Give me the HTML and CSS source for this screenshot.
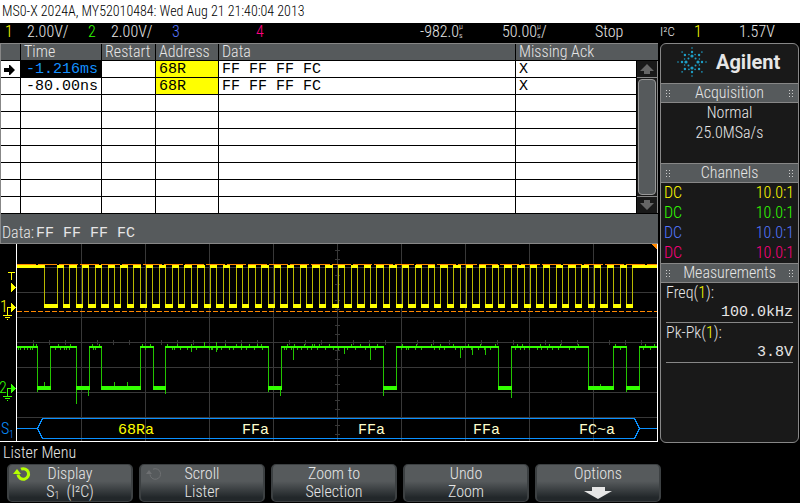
FILE: index.html
```html
<!DOCTYPE html>
<html lang="en">
<head>
    <meta charset="UTF-8">
    <meta name="viewport" content="width=device-width, initial-scale=1.0">
    <title>MSO-X 2024A</title>
    <link rel="stylesheet" href="styles.css">
</head>
<body>
    <header class="titlebar">MS0-X 2024A, MY52010484: Wed Aug 21 21:40:04 2013</header>
    <div class="status">
        <span class="ch1">1</span>
        <span>2.00V/</span>
        <span class="ch2">2</span>
        <span>2.00V/</span>
        <span class="ch3">3</span>
        <span class="ch4">4</span>
        <span class="timing">-982.0<span class="unit"><i>µ</i><i>s</i></span></span>
        <span class="timing">50.00<span class="unit"><i>µ</i><i>s</i></span>/</span>
        <span>Stop</span>
        <span class="trigger">I²C</span>
        <span class="ch1">1</span>
        <span>1.57V</span>
    </div>

    <main class="screen">
        <div class="left">
            <section class="lister">
                <table>
                    <colgroup>
                        <col class="col-mark"><col class="col-time"><col class="col-restart"><col class="col-address"><col><col class="col-ack"><col class="col-scroll">
                    </colgroup>
                    <thead>
                        <tr><th></th><th>Time</th><th>Restart</th><th>Address</th><th>Data</th><th colspan="2">Missing Ack</th></tr>
                    </thead>
                    <tbody>
                        <tr>
                            <td class="mark"><svg width="12" height="12" viewBox="0 0 12 12"><path d="M1 4h5V1h1l5 5-5 5H6V8H1z"/></svg></td>
                            <td class="selected">-1.216ms</td><td></td><td class="address">68R</td><td>FF FF FF FC</td><td>X</td>
                            <td class="scroll" rowspan="9">
                                <div class="scrollbar">
                                    <button class="arrow" aria-label="Scroll up"><svg width="16" height="12" viewBox="0 0 16 12"><path d="M8 1l7 7h-4v3H5V8H1z"/></svg></button>
                                    <div class="thumb"></div>
                                    <button class="arrow" aria-label="Scroll down"><svg width="16" height="12" viewBox="0 0 16 12"><path d="M8 11l7-7h-4V1H5v3H1z"/></svg></button>
                                </div>
                            </td>
                        </tr>
                        <tr><td></td><td>-80.00ns</td><td></td><td class="address">68R</td><td>FF FF FF FC</td><td>X</td></tr>
                        <tr><td></td><td></td><td></td><td></td><td></td><td></td></tr>
                        <tr><td></td><td></td><td></td><td></td><td></td><td></td></tr>
                        <tr><td></td><td></td><td></td><td></td><td></td><td></td></tr>
                        <tr><td></td><td></td><td></td><td></td><td></td><td></td></tr>
                        <tr><td></td><td></td><td></td><td></td><td></td><td></td></tr>
                        <tr><td></td><td></td><td></td><td></td><td></td><td></td></tr>
                        <tr><td></td><td></td><td></td><td></td><td></td><td></td></tr>
                    </tbody>
                </table>
                <div class="detail"><span>Data:</span><span class="bytes">FF FF FF FC</span></div>
            </section>

            <svg class="scope" viewBox="0 0 658 199" shape-rendering="crispEdges">
                <path id="grid" class="grid"/>
                <path id="clock-edges" class="clock-edge"/>
                <path id="clock-high" class="clock-high"/>
                <path id="clock-low" class="clock-low"/>
                <path class="cursor" stroke-dasharray="19 2" d="M17 20.5H657"/>
                <path class="cursor" stroke-dasharray="5 2" d="M17 67.5H657"/>
                <path id="data-noise" class="data-edge"/>
                <path id="data-edges" class="data-edge"/>
                <path id="data-high" class="data-high"/>
                <path id="data-low" class="data-low"/>
                <path class="bus" d="M17 184.5H37.5L42.5 174.5H634.5L639.5 184.5H657M37.5 184.5L42.5 194.5H634.5L639.5 184.5"/>
                <text class="bus-text address-text" x="118" y="190">68Ra</text>
                <text class="bus-text" x="242" y="190">FFa</text>
                <text class="bus-text" x="358" y="190">FFa</text>
                <text class="bus-text" x="473" y="190">FFa</text>
                <text class="bus-text" x="579" y="190">FC~a</text>
                <path class="frame" d="M16.5 0V197.5M657.5 0V198M0 197.5H658"/>
                <path class="corner" d="M651 0h6v6z"/>
                <!-- trigger level and ground markers -->
                <path class="mark1" d="M8 28.5h7M11.5 28v8"/>
                <path class="fill1" d="M11 39l5 4.5-5 4.5z"/>
                <text class="label1" x="0" y="68">1</text>
                <path class="mark1" d="M7.5 71V63.5H12M3 71.5h9M5 73.5h5M7 75.5h1"/>
                <path class="fill1" d="M11 59l5 4.5-5 4.5z"/>
                <text class="label2" x="-1" y="149">2</text>
                <path class="mark2" d="M7.5 152V144.5H12M3 152.5h9M5 154.5h5M7 156.5h1"/>
                <path class="fill2" d="M11 140l5 4.5-5 4.5z"/>
                <text class="label-bus" x="1" y="190">S</text>
                <text class="label-bus small" x="9" y="194">1</text>
            </svg>
        </div>

        <aside class="sidebar">
            <div class="brand">
                <svg width="30" height="30" viewBox="-15 -15 30 30">
                    <g id="spark"></g>
                </svg>
                <span>Agilent</span>
            </div>
            <h2>Acquisition</h2>
            <div class="acquisition">
                <p>Normal</p>
                <p>25.0MSa/s</p>
            </div>
            <h2>Channels</h2>
            <div class="channels">
                <p class="ch1"><span>DC</span><span>10.0:1</span></p>
                <p class="ch2"><span>DC</span><span>10.0:1</span></p>
                <p class="ch3"><span>DC</span><span>10.0:1</span></p>
                <p class="ch4"><span>DC</span><span>10.0:1</span></p>
            </div>
            <h2>Measurements</h2>
            <dl class="measurements">
                <dt>Freq(<span class="ch1">1</span>):</dt>
                <dd>100.0kHz</dd>
                <dt>Pk-Pk(<span class="ch1">1</span>):</dt>
                <dd>3.8V</dd>
            </dl>
        </aside>
    </main>

    <nav class="menu">
        <h1>Lister Menu</h1>
        <div class="softkeys">
            <button>
                <svg class="knob" width="18" height="16" viewBox="0 0 18 16"><path class="ring" d="M8 3.2A5.3 5.3 0 1 1 5 8.5"/><path class="head" d="M0 8l4-5 4 5z"/></svg>
                <span>Display</span><span>S<sub>1</sub>&nbsp; (I²C)</span>
            </button>
            <button>
                <svg class="knob off" width="18" height="16" viewBox="0 0 18 16"><path class="ring" d="M8 3.2A5.3 5.3 0 1 1 5 8.5"/><path class="head" d="M1 8l3-4 3 4z"/></svg>
                <span>Scroll</span><span>Lister</span>
            </button>
            <button><span>Zoom to</span><span>Selection</span></button>
            <button><span>Undo</span><span>Zoom</span></button>
            <button><span>Options</span><svg class="more" width="30" height="12" viewBox="0 0 30 12"><path d="M9 0h13v4h7L15 12 1 4h8z"/></svg></button>
        </div>
    </nav>

    <script>
        function draw(id, d) {
            document.getElementById(id).setAttribute("d", d);
        }

        // graticule: 64 x 25 divisions, minor ticks on the centre axes
        let grid = "";
        for (let x = 81; x < 657; x += 64) grid += `M${x}.5 0V197`;
        for (let y = 23; y < 197; y += 25) grid += `M17 ${y}.5H657`;
        for (let x = 33; x < 657; x += 16) grid += `M${x}.5 96V101`;
        for (let y = -2; y < 190; y += 25) grid += `M335 ${y + 8}.5h5M335 ${y + 17}.5h5`;
        draw("grid", grid);

        // a trace is high up to the first edge, then toggles at each edge
        function trace(name, edges, top, bottom) {
            let high = "", low = "", sides = "", start = 17;
            edges.concat(657).forEach((x, i) => {
                if (i % 2) low += `M${start} ${bottom}H${x + 1}`;
                else high += `M${start} ${top}H${x + 1}`;
                if (x < 657) sides += `M${x}.5 ${top}V${bottom}`;
                start = x;
            });
            draw(name + "-high", high);
            draw(name + "-low", low);
            draw(name + "-edges", sides);
        }

        const clock = [44, 57];
        for (let k = 0; k < 45; k++) {
            clock.push(Math.floor(63.3 + 12.8 * k), Math.floor(69.6 + 12.8 * k));
        }
        trace("clock", clock, 22.5, 62);
        trace("data", [37, 50, 76, 89, 101, 140, 153, 165, 268, 281, 383, 396, 498, 511, 588, 613, 626, 639], 103, 144);

        let noise = "";
        const up = [33, 36, 58, 70, 92, 99, 142, 150, 167, 177, 191, 204, 216, 225, 236, 241, 249, 257, 261, 287, 294, 304, 312, 314, 319, 329, 351, 360, 369, 377, 402, 416, 431, 440, 453, 468, 480, 495, 517, 522, 540, 549, 560, 578, 615, 645, 654];
        const down = [18, 20, 24, 27, 30, 32, 55, 60, 64, 66, 69, 93, 95, 145, 172, 174, 180, 187, 196, 209, 211, 212, 217, 221, 229, 233, 241, 246, 254, 262, 284, 286, 291, 297, 301, 307, 311, 317, 325, 333, 338, 347, 355, 365, 375, 401, 406, 408, 415, 421, 434, 439, 444, 455, 462, 471, 478, 484, 490, 515, 520, 524, 529, 537, 541, 547, 552, 558, 569, 575, 620, 643, 650];
        up.forEach(x => noise += `M${x}.5 100V103`);
        down.forEach(x => noise += `M${x}.5 103V106`);
        // longer glitches
        noise += "M76.5 144v16M88.5 144v8M165.5 144v6M204.5 98v6M216.5 98v6M191.5 103v5M216.5 103v5M293.5 103v13M370.5 103v13M344.5 103v7M460.5 103v11M472.5 103v8M485.5 103v8M280.5 144v8M268.5 144v4M383.5 144v8M511.5 144v10M37.5 144v4M626.5 144v4M44.5 138v5M114.5 138v5M127.5 138v5M600.5 140v4";
        draw("data-noise", noise);

        // starburst: angle, distance, dot radius
        const rays = [[0, 14, 0.8], [0, 10, 1.2], [0, 6, 1.6], [45, 14, 0.8], [45, 10, 1.2], [45, 5, 1], [22.5, 8, 0.8], [67.5, 8, 0.8]];
        let dots = "";
        for (let turn = 0; turn < 360; turn += 90) {
            rays.forEach(([angle, distance, r]) => {
                const a = (angle + turn) * Math.PI / 180;
                dots += `<circle cx="${distance * Math.cos(a)}" cy="${distance * Math.sin(a)}" r="${r}"/>`;
            });
        }
        document.getElementById("spark").innerHTML = dots;
    </script>
</body>
</html>
```
FILE: styles.css
```css
* {
    box-sizing: border-box;
}

body {
    margin: 0;
    background: #000;
    color: #e6e6e6;
    font-family: 'Roboto Condensed', 'Liberation Sans Narrow', 'Liberation Sans', sans-serif;
    font-size: 16px;
    font-weight: 300;
    line-height: 20px;
}

h1, h2, p, dl, dd {
    margin: 0;
    font-size: 16px;
    font-weight: 300;
}

.ch1 { color: #ffff00; }
.ch2 { color: #33ff00; }
.ch3 { color: #5577ff; }
.ch4 { color: #ff0080; }

.titlebar {
    background: #fff;
    color: #000;
    height: 23px;
    padding: 1px 2px;
    font-size: 14px;
}

.status {
    display: grid;
    grid-template-columns: 22fr 61fr 23fr 61fr 84fr 164fr 82fr 93fr 65fr 34fr 45fr 61fr;
    height: 20px;
    line-height: 18px;
    padding-left: 5px;
    white-space: nowrap;
}

.timing {
    display: flex;
}

.unit {
    display: flex;
    flex-direction: column;
    font-size: 8px;
    line-height: 8px;
}

.unit i {
    height: 9px;
    font-style: normal;
}

.trigger {
    font-size: 13px;
}

.screen {
    display: grid;
    grid-template-columns: minmax(0, 1fr) 139px;
    gap: 2px;
    padding-right: 1px;
}

.lister {
    background: #565a5c;
    border-top: 1px solid #878787;
    border-left: 1px solid #878787;
    border-bottom: 1px solid #878787;
}

table {
    width: 100%;
    table-layout: fixed;
    border-spacing: 0;
}

.col-mark { width: 20px; }
.col-time { width: 81px; }
.col-restart { width: 54px; }
.col-address { width: 63px; }
.col-ack { width: 121px; }
.col-scroll { width: 21px; }

th, td {
    height: 17px;
    padding: 0 3px;
    border-right: 1px solid #000;
    border-bottom: 1px solid #000;
    line-height: 16px;
    text-align: left;
    white-space: nowrap;
}

th {
    font-weight: 300;
}

th:last-child {
    border-right: none;
}

td {
    padding-top: 2px;
    background: #fff;
    color: #000;
    font-family: 'Liberation Mono', monospace;
    font-size: 15px;
    line-height: 14px;
}

td:nth-child(2) {
    padding-left: 5px;
}

.mark svg {
    display: block;
}

.mark {
    padding: 1px 2px 0;
}

.selected {
    background: #000;
    color: #1490ff;
}

.address {
    background: #ffff00;
}

td.scroll {
    padding: 0;
    border-right: none;
    height: 153px;
    background: #191919;
}

.scrollbar {
    display: flex;
    flex-direction: column;
    height: 152px;
    border-right: 1px solid #878787;
}

.arrow {
    height: 17px;
    padding: 0;
    border: 1px solid #878787;
    border-width: 0 0 1px;
    background: #191919;
    line-height: 0;
}

.arrow:last-child {
    border-width: 1px 0 0;
}

.arrow path {
    fill: #666;
}

.thumb {
    flex: 1;
    margin: 1px;
    border: 1px solid #999;
    border-radius: 4px;
    background: #565a5c;
}

.detail {
    display: flex;
    gap: 2px;
    height: 29px;
    padding: 9px 1px 0;
}

.bytes {
    font-family: 'Liberation Mono', monospace;
    font-size: 15px;
    line-height: 22px;
}

.scope {
    display: block;
    width: 100%;
}

.scope path {
    fill: none;
}

.scope .grid { stroke: #383838; }
.scope .clock-edge { stroke: #b8b800; }
.scope .clock-high { stroke: #ffff00; stroke-width: 3; }
.scope .clock-low { stroke: #ffff00; stroke-width: 4; }
.scope .cursor { stroke: #ff8800; }
.scope .data-edge { stroke: #22c400; }
.scope .data-high { stroke: #33ff00; stroke-width: 2; }
.scope .data-low { stroke: #33ff00; stroke-width: 4; }
.scope .bus { stroke: #0a90ff; }
.scope .frame { stroke: #fff; }
.scope .corner { fill: #ff8800; }
.scope .mark1 { stroke: #ffff00; }
.scope .mark2 { stroke: #33ff00; }
.scope .fill1 { fill: #ffff00; }
.scope .fill2 { fill: #33ff00; }
.label1 { fill: #ffff00; }
.label2 { fill: #33ff00; }
.label-bus { fill: #0a90ff; }
.small { font-size: 10px; }

.bus-text {
    fill: #ffffcc;
    font-family: 'Liberation Mono', monospace;
    font-size: 15px;
}

.address-text {
    fill: #ffff00;
}

.sidebar {
    border: 1px solid #878787;
    border-radius: 6px;
    background: #191919;
}

.brand {
    display: flex;
    align-items: center;
    gap: 9px;
    height: 39px;
    padding: 0 0 3px 16px;
    font-family: Roboto, sans-serif;
    font-size: 20px;
    font-weight: bold;
}

.brand svg {
    fill: #1ea0c8;
}

.sidebar h2 {
    display: flex;
    align-items: center;
    justify-content: space-between;
    height: 20px;
    padding: 0 4px;
    border-top: 1px solid #878787;
    border-bottom: 1px solid #878787;
    background: #565a5c;
}

/* drag grips */
.sidebar h2::before,
.sidebar h2::after {
    content: "";
    width: 6px;
    height: 9px;
    background: radial-gradient(circle, #ccc 1px, transparent 1px) 0 0 / 3px 3px;
}

.acquisition {
    height: 60px;
    text-align: center;
}

.channels {
    padding: 0 4px 0 3px;
}

.channels p {
    display: flex;
    justify-content: space-between;
}

.measurements {
    padding: 0 5px;
}

.measurements dd {
    height: 20px;
    border-bottom: 1px solid #878787;
    font-family: 'Liberation Mono', monospace;
    font-size: 15px;
    text-align: right;
}

.menu {
    padding: 0 139px 0 7px;
}

.menu h1 {
    margin-left: -4px;
    padding-bottom: 1px;
    line-height: 20px;
}

.softkeys {
    display: grid;
    grid-template-columns: repeat(5, 1fr);
    gap: 6px;
}

.softkeys button {
    position: relative;
    display: flex;
    flex-direction: column;
    align-items: center;
    height: 38px;
    padding: 0;
    border: 1px solid #3c4042;
    border-width: 1px 2px;
    border-radius: 5px;
    background: linear-gradient(#565a5c 45%, #22272a 90%);
    color: #e6e6e6;
    font-family: inherit;
    font-size: 16px;
    font-weight: 300;
    line-height: 18px;
}

.softkeys sub {
    font-size: 10px;
    line-height: 0;
    vertical-align: -2px;
}

.knob {
    position: absolute;
    top: 1px;
    left: 4px;
}

.ring {
    fill: none;
    stroke: #b4ff00;
    stroke-width: 3;
}

.head {
    fill: #b4ff00;
}

.off .ring {
    stroke: #6e7072;
    stroke-width: 1;
}

.off .head {
    fill: #6e7072;
}

.more {
    margin-top: 4px;
    fill: #e6e6e6;
}
```
